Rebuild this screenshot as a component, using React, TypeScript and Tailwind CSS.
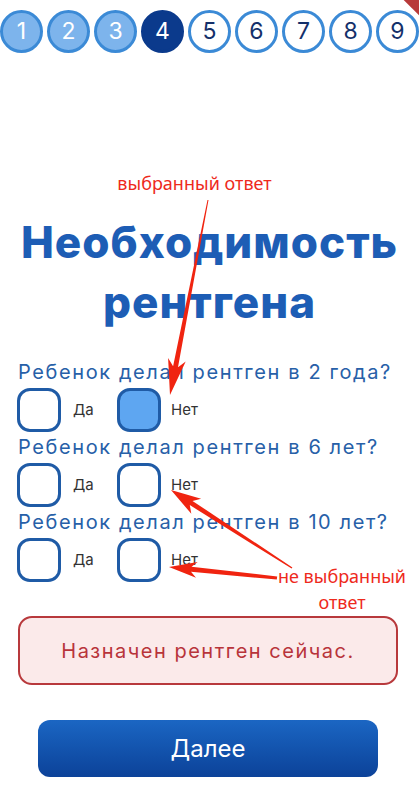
import React from "react";

type P = [number, number];

function arrow(tail: P, tip: P, headLen: number, headW: number, w0: number, w1: number): string {
  const dx = tip[0] - tail[0];
  const dy = tip[1] - tail[1];
  const L = Math.hypot(dx, dy);
  const ux = dx / L, uy = dy / L;
  const nx = -uy, ny = ux;
  const bx = tip[0] - ux * headLen, by = tip[1] - uy * headLen;
  const bx2 = tip[0] - ux * headLen * 0.8, by2 = tip[1] - uy * headLen * 0.8;
  const pts: P[] = [
    [tail[0] + nx * w0 / 2, tail[1] + ny * w0 / 2],
    [bx2 + nx * w1 / 2, by2 + ny * w1 / 2],
    [bx + nx * headW, by + ny * headW],
    tip,
    [bx - nx * headW, by - ny * headW],
    [bx2 - nx * w1 / 2, by2 - ny * w1 / 2],
    [tail[0] - nx * w0 / 2, tail[1] - ny * w0 / 2],
  ];
  return pts.map((p) => `${p[0].toFixed(1)},${p[1].toFixed(1)}`).join(" ");
}

const font = { fontFamily: "Inter, 'Noto Sans', sans-serif" };
const noto = { fontFamily: "'Noto Sans', sans-serif" };

function Step({ n, state }: { n: number; state: "done" | "current" | "todo" }) {
  const cls =
    state === "done"
      ? "bg-[#7db4ec] text-white border-[#3b8ad6]"
      : state === "current"
      ? "bg-[#0b3a8c] text-white border-[#0b3a8c]"
      : "bg-white text-[#14306a] border-[#3b8ad6]";
  return (
    <div
      className={`w-[43px] h-[43px] rounded-full border-[3px] flex items-center justify-center text-[23px] ${cls}`}
    >
      {n}
    </div>
  );
}

function Box({ checked }: { checked?: boolean }) {
  return (
    <div
      className={`w-[44px] h-[44px] rounded-[13px] border-[3px] border-[#1f5ba6] ${
        checked ? "bg-[#5ea6f1]" : "bg-white"
      }`}
    />
  );
}

function Question({ text, sel }: { text: string; sel?: "yes" | "no" }) {
  return (
    <div>
      <div className="text-[20px] leading-[24px] tracking-[1.6px] text-[#2760a8] pl-[1px]">{text}</div>
      <div className="flex mt-[4px]">
        <div className="w-[100px] flex items-center">
          <Box checked={sel === "yes"} />
          <span className="ml-[12px] text-[15px] text-[#333]">Да</span>
        </div>
        <div className="flex items-center">
          <Box checked={sel === "no"} />
          <span className="ml-[10px] text-[15px] text-[#333]">Нет</span>
        </div>
      </div>
    </div>
  );
}

export default function App() {
  return (
    <div className="relative w-[419px] h-[790px] bg-white overflow-hidden" style={font}>
      <div className="absolute -top-[12px] -right-[22px] w-[60px] h-[16px] bg-[#b83a3a] rotate-45" />
      <div className="flex justify-between pt-[10px]">
        {[1, 2, 3, 4, 5, 6, 7, 8, 9].map((n) => (
          <Step key={n} n={n} state={n < 4 ? "done" : n === 4 ? "current" : "todo"} />
        ))}
      </div>

      <div className="text-center text-[18px] text-[#ee2a1c] mt-[119px] leading-[22px] pr-[30px]" style={noto}>
        выбранный ответ
      </div>

      <h1 className="text-center font-extrabold text-[#1d5db5] text-[44px] tracking-[1px] leading-[60px] mt-[18px]">
        Необходимость
        <br />
        рентгена
      </h1>

      <div className="px-[17px] mt-[28px] flex flex-col gap-[3px]">
        <Question text="Ребенок делал рентген в 2 года?" sel="no" />
        <Question text="Ребенок делал рентген в 6 лет?" />
        <Question text="Ребенок делал рентген в 10 лет?" />
      </div>

      <div className="ml-[18px] mr-[21px] mt-[34px] h-[69px] rounded-[14px] border-2 border-[#b8393c] bg-[#fbeaea] flex items-center justify-center text-[20px] tracking-[1.5px] text-[#b8343a]">
        Назначен рентген сейчас.
      </div>

      <div className="ml-[38px] mr-[41px] mt-[35px] h-[57px] rounded-[12px] bg-gradient-to-b from-[#1b66c3] to-[#0c4299] flex items-center justify-center text-white text-[24px]">
        Далее
      </div>

      <div
        className="absolute left-[268px] top-[563px] w-[148px] text-center text-[18px] leading-[26px] text-[#ee2a1c]"
        style={noto}
      >
        не выбранный
        <br />
        ответ
      </div>

      <svg className="absolute inset-0 pointer-events-none" width="419" height="790" viewBox="0 0 419 790">
        <polygon points={arrow([208, 200], [170, 395], 36, 9, 1, 5)} fill="#f02410" />
        <polygon points={arrow([292, 568], [171, 490], 30, 9, 1.5, 5)} fill="#f02410" />
        <polygon points={arrow([277, 578], [169, 567], 28, 8, 3, 5)} fill="#f02410" />
      </svg>
    </div>
  );
}
